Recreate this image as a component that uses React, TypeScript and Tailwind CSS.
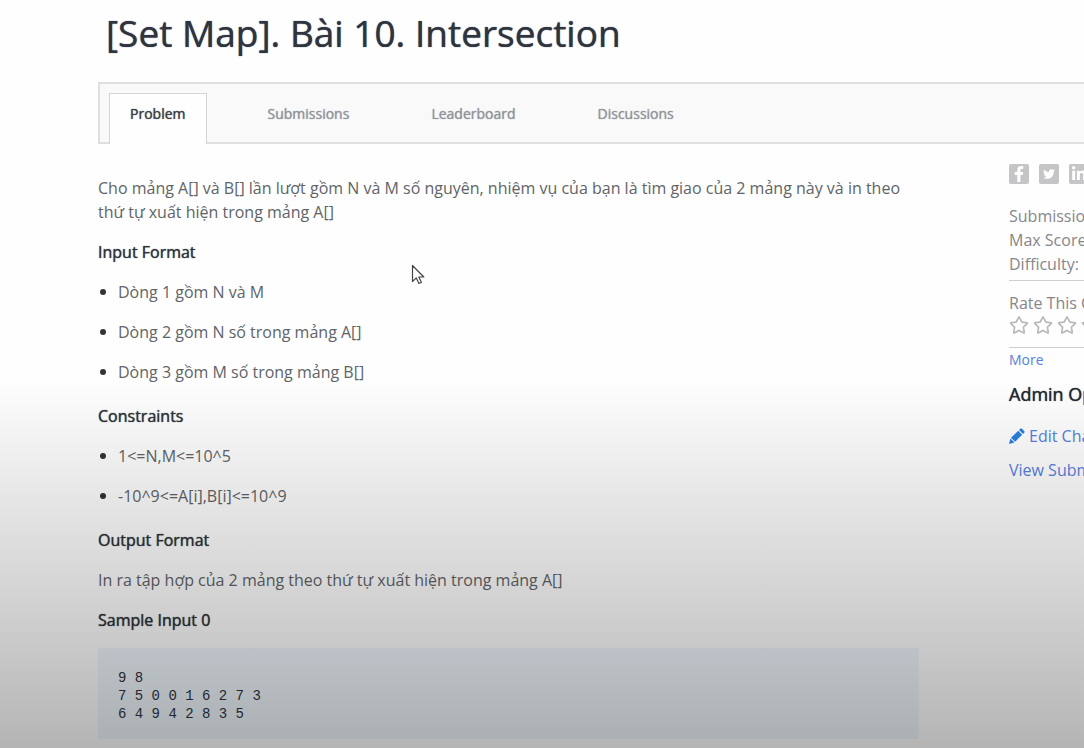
import { FaFacebookF, FaTwitter, FaLinkedinIn, FaRegStar } from "react-icons/fa";

const tabs = ["Submissions", "Leaderboard", "Discussions"];

const social = [
  { label: "Share on Facebook", Icon: FaFacebookF, size: "size-4" },
  { label: "Share on Twitter", Icon: FaTwitter, size: "size-3" },
  { label: "Share on LinkedIn", Icon: FaLinkedinIn, size: "size-4" },
];

function Heading({ children }: { children: string }) {
  return (
    <h2 className="mb-4 text-[#30343a] [text-shadow:0_0_1px_currentColor]">{children}</h2>
  );
}

function Bullets({ items }: { items: string[] }) {
  return (
    <ul className="mb-5 flex flex-col gap-4">
      {items.map((item) => (
        <li key={item} className="flex items-center">
          <span className="ml-0.5 mr-3 size-1.5 shrink-0 rounded-full bg-[#333]" />
          {item}
        </li>
      ))}
    </ul>
  );
}

function Pencil() {
  return (
    <svg viewBox="0 0 16 16" fill="#2a80e0" className="size-4 shrink-0" aria-hidden="true">
      <path d="M0 16l1.4-5.4 4 4z" />
      <path d="M2 9.8l7.2-7 4 4-7.2 7z" />
      <path d="M10 2l1.3-1.2c.5-.5 1.2-.5 1.7 0l2.2 2.2c.5.5.5 1.2 0 1.7L14 6z" />
    </svg>
  );
}

export default function App() {
  return (
    <div className="relative min-h-screen overflow-hidden bg-[#fefefe] pl-[98px] font-['Open_Sans','Noto_Sans',sans-serif] text-base leading-6 text-[#616467]">
      <h1 className="pb-6 pl-2 pt-[7px] text-[37px] leading-[51px] text-[#30343f] [text-shadow:0_0_1px_currentColor]">
        [Set Map]. Bài 10. Intersection
      </h1>

      <nav className="flex h-[62px] items-end gap-10 border-y-2 border-l-2 border-[#dfdfe1] bg-[#f9f9fa] pl-[9px] text-sm text-[#929499] [text-shadow:0_0_1px_currentColor]">
        <a
          href="#problem"
          aria-current="page"
          className="-mb-0.5 flex h-[51px] items-center border border-b-0 border-[#d4d5d9] bg-[#fefefe] px-5 pb-2.5 text-[#3c3f45] [text-shadow:0_0_1px_currentColor]"
        >
          Problem
        </a>
        {tabs.map((tab) => (
          <a
            key={tab}
            href={"#" + tab.toLowerCase()}
            className="-mb-0.5 flex h-[51px] items-center border border-transparent px-5 pb-2.5"
          >
            {tab}
          </a>
        ))}
      </nav>

      <div className="flex">
        <main className="min-w-0 flex-1 pt-8">
          <p className="mb-4">
            Cho mảng A[] và B[] lần lượt gồm N và M số nguyên, nhiệm vụ của bạn là tìm giao của 2 mảng này và in theo
            thứ tự xuất hiện trong mảng A[]
          </p>
          <Heading>Input Format</Heading>
          <Bullets
            items={["Dòng 1 gồm N và M", "Dòng 2 gồm N số trong mảng A[]", "Dòng 3 gồm M số trong mảng B[]"]}
          />
          <Heading>Constraints</Heading>
          <Bullets items={["1<=N,M<=10^5", "-10^9<=A[i],B[i]<=10^9"]} />
          <Heading>Output Format</Heading>
          <p className="mb-4">In ra tập hợp của 2 mảng theo thứ tự xuất hiện trong mảng A[]</p>
          <Heading>Sample Input 0</Heading>
          <pre className="bg-[#eff6fc] px-5 pb-4 pt-[21px] font-['Liberation_Mono',monospace] text-sm leading-[18px] text-[#30343f]">
            {"9 8\n7 5 0 0 1 6 2 7 3\n6 4 9 4 2 8 3 5"}
          </pre>
        </main>

        <aside className="ml-[90px] w-[75px] shrink-0 whitespace-nowrap pt-5 text-[#85878b]">
          <div className="mb-5 flex gap-2.5">
            {social.map(({ label, Icon, size }) => (
              <a
                key={label}
                href="#share"
                aria-label={label}
                className="flex size-5 shrink-0 items-center justify-center overflow-hidden rounded-xs bg-[#c5c5c8] text-white"
              >
                <Icon className={size} />
              </a>
            ))}
          </div>
          <p>Submissions:</p>
          <p>Max Score:</p>
          <p>
            Difficulty: <span>Medium</span>
          </p>
          <div className="mt-1 border-y border-[#d0d0d3] pb-3 pt-2.5">
            <p>Rate This Challenge:</p>
            <div className="flex gap-1">
              {[1, 2, 3, 4, 5].map((n) => (
                <button key={n} type="button" aria-label={`Rate ${n}`} className="shrink-0 text-[#b9b9bd]">
                  <FaRegStar className="size-5" />
                </button>
              ))}
            </div>
          </div>
          <a href="#more" className="block text-sm leading-6 text-[#5780dc]">
            More
          </a>
          <h3 className="mt-2 text-lg leading-7 text-[#25282f] [text-shadow:0_0_1px_currentColor]">Admin Options</h3>
          <a href="#edit" className="mt-4 flex items-center gap-1 text-[#5780dc]">
            <Pencil />
            Edit Challenge
          </a>
          <a href="#submissions" className="mt-2.5 block text-[#5780dc]">
            View Submissions
          </a>
        </aside>
      </div>

      <div className="pointer-events-none absolute inset-x-0 bottom-0 h-[370px] bg-linear-to-b from-black/0 to-black/29" />

      <svg
        className="pointer-events-none absolute left-[411px] top-[264px] h-[22px] w-[14px]"
        viewBox="0 0 14 22"
        fill="#fff"
        stroke="#444"
        strokeWidth="1.2"
        strokeLinejoin="round"
        aria-hidden="true"
      >
        <path d="M1.5 1.5v16l3.8-3.6 2.7 5.6 2.4-1.2-2.6-5.3h5z" />
      </svg>
    </div>
  );
}
